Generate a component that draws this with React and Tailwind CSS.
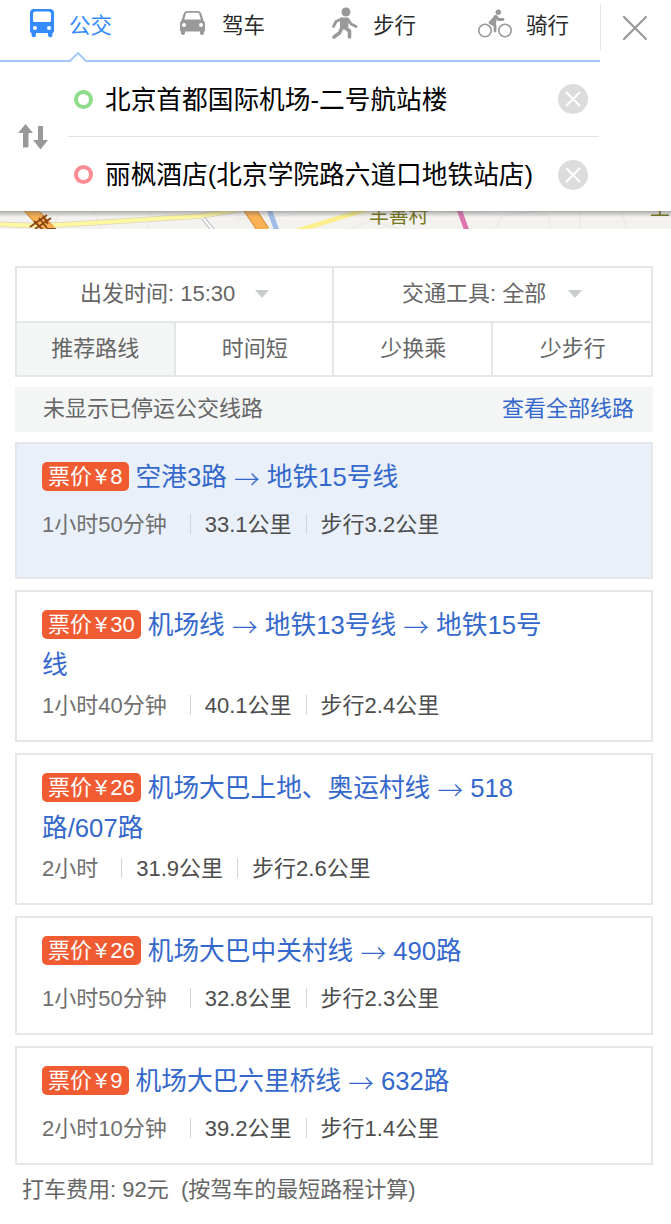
import { Fragment } from "react";

const tabs = [
    { label: "公交", icon: BusIcon, className: "pl-[29px] gap-[14px] text-[#338bff]" },
    { label: "驾车", icon: CarIcon, className: "pl-[29px] gap-[16px] text-[#2b2b2b]" },
    { label: "步行", icon: WalkIcon, className: "pl-[31px] gap-[15px] text-[#2b2b2b]" },
    { label: "骑行", icon: BikeIcon, className: "pl-[28px] gap-[14px] text-[#2b2b2b]" },
];

const sorts = ["推荐路线", "时间短", "少换乘", "少步行"];

const routes = [
    { price: 8, legs: ["空港3路", "地铁15号线"], time: "1小时50分钟", distance: "33.1公里", walk: "步行3.2公里" },
    { price: 30, legs: ["机场线", "地铁13号线", "地铁15号线"], time: "1小时40分钟", distance: "40.1公里", walk: "步行2.4公里" },
    { price: 26, legs: ["机场大巴上地、奥运村线", "518路/607路"], time: "2小时", distance: "31.9公里", walk: "步行2.6公里" },
    { price: 26, legs: ["机场大巴中关村线", "490路"], time: "1小时50分钟", distance: "32.8公里", walk: "步行2.3公里" },
    { price: 9, legs: ["机场大巴六里桥线", "632路"], time: "2小时10分钟", distance: "39.2公里", walk: "步行1.4公里" },
];

function BusIcon() {
    return (
        <svg width="26" height="30" viewBox="0 0 26 30" fill="#338bff">
            <path
                fillRule="evenodd"
                d="M5 1h16a4 4 0 0 1 4 4v18a2 2 0 0 1-1.500 2v2a2 2 0 0 1-4.500 0v-2H7v2a2 2 0 0 1-4.500 0v-2A2 2 0 0 1 1 23V5a4 4 0 0 1 4-4zM6.500 3.500A2.500 2.500 0 0 0 4 6v6.500a1.500 1.500 0 0 0 1.500 1.500h15a1.500 1.500 0 0 0 1.500-1.500V6a2.500 2.500 0 0 0-2.500-2.500z"
            />
            <circle cx="6" cy="20" r="2" fill="#fff" />
            <circle cx="20" cy="20" r="2" fill="#fff" />
        </svg>
    );
}

function CarIcon() {
    return (
        <svg width="27" height="26" viewBox="0 0 26 26" fill="#999">
            <path
                fillRule="evenodd"
                d="M7.500 1h11a3.500 3.500 0 0 1 3.300 2.500L24 10.500c1 1 1.500 2 1.500 3.500v6.500a1 1 0 0 1-1 1V23a2 2 0 0 1-4 0v-1.500h-15V23a2 2 0 0 1-4 0v-1.500a1 1 0 0 1-1-1V14c0-1.500.5-2.500 1.500-3.500l2.200-7A3.500 3.500 0 0 1 7.500 1zM7.800 2.800a1.500 1.500 0 0 0-1.500 1.200L4.700 9.500h16.600L19.700 4a1.500 1.500 0 0 0-1.500-1.200z"
            />
            <circle cx="4.500" cy="15" r="2" fill="#fff" />
            <circle cx="21.500" cy="15" r="2" fill="#fff" />
        </svg>
    );
}

function WalkIcon() {
    return (
        <svg width="27" height="33" viewBox="0 0 27 33" fill="none" stroke="#999" strokeLinecap="round" strokeLinejoin="round">
            <circle cx="15" cy="5" r="4.500" fill="#999" stroke="none" />
            <path d="M10.500 12h6l-1 9h-5z" fill="#999" strokeWidth="3" />
            <path d="M10.500 12l-5.500 2.500-2.500 5M17 12.500l3 4.500 5 2.500" strokeWidth="2.800" />
            <path d="M11 20.500L8.500 26l-5.500 4M13.500 20l5 4v6" strokeWidth="3.600" />
        </svg>
    );
}

function BikeIcon() {
    return (
        <svg width="34" height="29" viewBox="0 0 34 29" fill="none" stroke="#999" strokeLinecap="round" strokeLinejoin="round">
            <circle cx="7" cy="21.500" r="6.200" strokeWidth="1.600" />
            <circle cx="27" cy="21.500" r="6.200" strokeWidth="1.600" />
            <circle cx="20.300" cy="3.300" r="2.700" fill="#999" stroke="none" />
            <path d="M17.500 7.500l-5 6 4 2z" fill="#999" strokeWidth="2.800" />
            <path d="M12 13.500l5 3v5.500M18 7.500l2.500 3h4.500" strokeWidth="2.800" />
        </svg>
    );
}

function MapStrip() {
    return (
        <svg className="block h-[18px] w-full" viewBox="0 0 671 18">
            <defs>
                <linearGradient id="shade" x1="0" x2="0" y1="0" y2="1">
                    <stop offset="0" stopColor="#555" stopOpacity="0.45" />
                    <stop offset="1" stopColor="#555" stopOpacity="0" />
                </linearGradient>
            </defs>
            <rect width="671" height="18" fill="#f4f2ee" />
            <path
                d="M60 0l-8 18M95 0l5 18M150 0l-2 18M235 8l60-4M350 18l20-8 30 8M440 0l60 4 40-4M495 18l8-14h45l3 14M580 0v18M622 0l4 18"
                fill="none"
                stroke="#e8e7e6"
            />
            <path d="M-5 13c30 2 55 2 80 0l110-7c20-1 35-4 60-9" fill="none" stroke="#ddd5bd" strokeWidth="5.500" />
            <path d="M-5 13c30 2 55 2 80 0l110-7c20-1 35-4 60-9" fill="none" stroke="#fdf7a2" strokeWidth="4" />
            <path d="M293 21l75-23" stroke="#fbf08c" strokeWidth="4.500" />
            <path d="M28-4l22 24M248-4l16 24" stroke="#d78f35" strokeWidth="12" />
            <path d="M28-4l22 24M248-4l16 24" stroke="#f9b154" strokeWidth="10" />
            <path d="M269-2l8 22" stroke="#9dbce6" strokeWidth="5" />
            <path d="M203 7l10 12" stroke="#aaa" strokeWidth="4" />
            <path d="M203 7l10 12" stroke="#fff" strokeWidth="2.500" />
            <path d="M459-2l8 22" stroke="#de75ad" strokeWidth="5" />
            <path d="M30 16l17-12M35 18l16-11M34 10l9 9M39 7l8 10M43 5l5 8M47 18h9" fill="none" stroke="#8b4513" strokeWidth="1.800" />
            <text x="369" y="12" fontSize="19.800" fill="#77761c">丰善村</text>
            <text x="650" y="5" fontSize="19.800" fill="#77761c">工</text>
            <rect width="671" height="6" fill="url(#shade)" />
        </svg>
    );
}

function ClearButton() {
    return (
        <button className="mr-[11px] flex size-[30px] items-center justify-center rounded-full bg-[#dcdcdc]">
            <svg width="16" height="16" viewBox="0 0 16 16" stroke="#fff" strokeWidth="2">
                <path d="M1 1l14 14M15 1L1 15" />
            </svg>
        </button>
    );
}

function Header() {
    return (
        <header className="h-[211px] bg-white">
            <div className="flex h-[62px]">
                <div className="w-[600px]">
                    <nav className="grid h-[52px] grid-cols-4 text-[21.500px] leading-8">
                        {tabs.map(({ label, icon: Icon, className }) => (
                            <button key={label} className={`flex items-center pb-[6px] ${className}`}>
                                <Icon />
                                <span className="pt-[5px]">{label}</span>
                            </button>
                        ))}
                    </nav>
                    {/* underline with a notch under the active tab */}
                    <svg className="block" width="600" height="10" viewBox="0 0 600 10" fill="none" stroke="#a0c6fb" strokeWidth="1.800">
                        <path d="M0 9h70l8-8 8 8h514" />
                    </svg>
                </div>
                <div className="mt-1 h-[47px] w-px bg-[#e6e6e6]" />
                <button className="ml-[21px] h-14">
                    <svg width="26" height="26" viewBox="0 0 26 26" stroke="#999" strokeWidth="2.200" strokeLinecap="round">
                        <path d="M2 2l22 22M24 2L2 24" />
                    </svg>
                </button>
            </div>

            <div className="flex h-[149px] text-[25.700px] text-black">
                <button className="flex h-[149px] w-[68px] items-center pl-[18px]">
                    <svg width="30" height="26" viewBox="0 0 30 26" fill="#999">
                        <path d="M7.500 0l7.500 9h-4.500v13a1.500 1.500 0 0 1-1.500 1.500H5V9H0zM20 2h4.500a.5.5 0 0 1 .5.5V16h5l-7.500 9.500L15 16h5z" />
                    </svg>
                </button>
                <div className="w-[531px]">
                    <div className="flex h-[75px] items-center border-b-[1.500px] border-[#e3e3e3]">
                        <span className="ml-[6px] size-[19px] rounded-full border-4 border-[#8fdc8b]" />
                        <span className="ml-3 flex-1 pt-[2px]">北京首都国际机场-二号航站楼</span>
                        <ClearButton />
                    </div>
                    <div className="flex h-[76px] items-center">
                        <span className="mb-[2px] ml-[6px] size-[19px] rounded-full border-4 border-[#fb8d92]" />
                        <span className="ml-3 flex-1 whitespace-nowrap">丽枫酒店(北京学院路六道口地铁站店)</span>
                        <ClearButton />
                    </div>
                </div>
            </div>
        </header>
    );
}

function Caret() {
    return (
        <svg width="14" height="8" viewBox="0 0 14 8" fill="#c9cdce">
            <path d="M0 0h14L7 8z" />
        </svg>
    );
}

function Filters() {
    return (
        <div className="border-2 border-[#e4e7e7]">
            <div className="grid h-[53px] grid-cols-2">
                <button className="flex items-center gap-[20px] border-r-2 border-[#e4e7e7] pb-[2px] pl-[63px]">
                    <span>出发时间: 15:30</span>
                    <Caret />
                </button>
                <button className="flex items-center gap-[22px] pb-[2px] pl-[68px]">
                    <span>交通工具: 全部</span>
                    <Caret />
                </button>
            </div>
            <div className="grid h-[54px] grid-cols-4 divide-x-2 divide-[#e4e7e7] border-t-2 border-[#e4e7e7]">
                {sorts.map((sort, i) => (
                    <button key={sort} className={`pb-[2px] ${i === 0 ? "bg-[#f4f6f6]" : "bg-white pl-[2px]"}`}>
                        {sort}
                    </button>
                ))}
            </div>
        </div>
    );
}

function RouteCard({ route, active }) {
    return (
        <li className={`border-2 border-[#e4e6e8] px-[25px] pt-[13px] ${active ? "bg-[#e9f0fa] pb-[33px]" : "bg-white pb-[15px]"}`}>
            <h3 className="min-h-[47px] w-[510px] text-[25.700px] leading-10 text-[#3468cc]">
                <span className="mr-[7px] inline-block h-[29px] rounded-[5px] bg-[#f15b32] px-[6px] align-[2px] text-[22px] leading-[29px] text-white">
                    票价<span className="mx-[3px]">¥</span>{route.price}
                </span>
                {route.legs.map((leg, i) => (
                    <Fragment key={i}>
                        {i > 0 && <span className="inline-block translate-y-[3px] font-['Noto_Sans_CJK_SC'] leading-none font-light">{"→"}</span>}
                        {i > 0 && " "}
                        {leg}
                        {i < route.legs.length - 1 && " "}
                    </Fragment>
                ))}
            </h3>
            <div className="flex h-10 items-center text-[#4d4d4d]">
                <span className="text-[#707070]">{route.time}</span>
                <span className="mr-[14px] ml-[23px] h-5 w-px bg-[#d4d4d4]" />
                <span>{route.distance}</span>
                <span className="mx-[14px] h-5 w-px bg-[#d4d4d4]" />
                <span>{route.walk}</span>
            </div>
        </li>
    );
}

export default function App() {
    return (
        <div className="min-h-[1224px] w-[671px] bg-white font-['Liberation_Sans','Noto_Sans_CJK_SC',sans-serif]">
            <Header />
            <MapStrip />
            <main className="mt-[37px] ml-[15px] w-[638px] text-[22px] text-[#666]">
                <Filters />
                <div className="mt-[10px] flex h-[45px] items-center justify-between bg-[#f4f6f6] pr-[19px] pb-[2px] pl-[28px]">
                    <span>未显示已停运公交线路</span>
                    <a className="text-[#3468cc]">查看全部线路</a>
                </div>
                <ul className="mt-[10px] space-y-[11px]">
                    {routes.map((route, i) => (
                        <RouteCard key={i} route={route} active={i === 0} />
                    ))}
                </ul>
                <p className="mt-[9px] ml-[7px] leading-8">打车费用: 92元&nbsp; (按驾车的最短路程计算)</p>
            </main>
        </div>
    );
}
